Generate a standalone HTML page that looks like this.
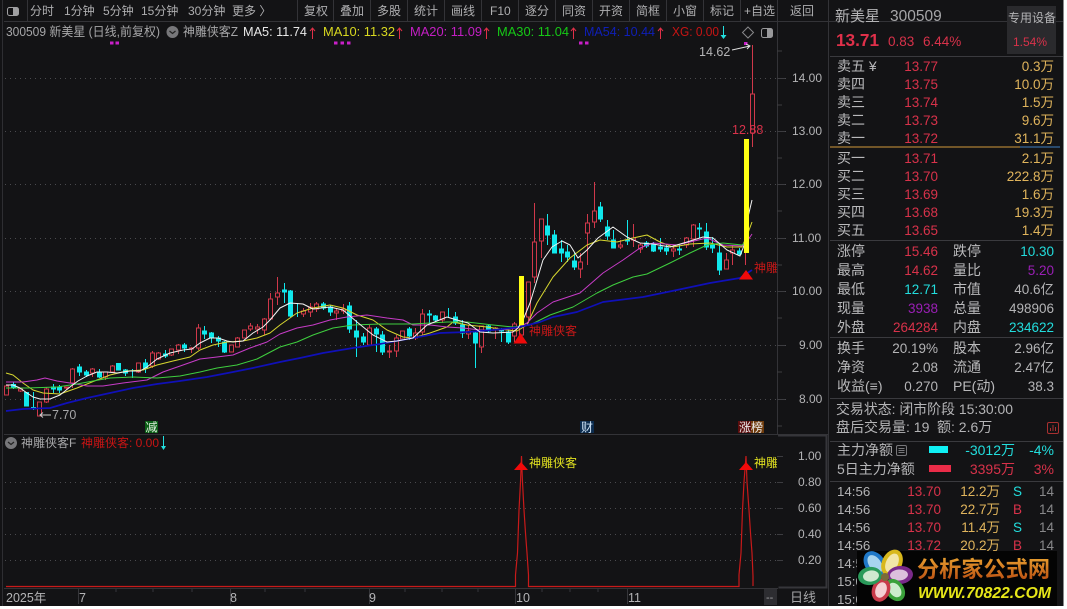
<!DOCTYPE html>
<html><head><meta charset="utf-8">
<style>
html,body{margin:0;padding:0;background:#fff;width:1067px;height:609px;overflow:hidden}
svg{display:block;font-family:"Liberation Sans","Noto Sans CJK SC",sans-serif}
.n{font-size:12px;fill:#aeaeb0}
.t{font-size:12.5px}
.a{font-size:12px;fill:#b4b4b6}
.l{font-size:14px;fill:#b9b9bb}
.p{font-size:13.5px;fill:#d8324a;text-anchor:end}
.v{font-size:13.5px;fill:#e0b45c;text-anchor:end}
.g{font-size:13.5px;fill:#b4b4b6;text-anchor:end}
.c{font-size:13.5px;fill:#22dddd;text-anchor:end}
.m{font-size:13.5px;fill:#9a1fb5;text-anchor:end}
.d{fill:none;stroke:#4a4a4e;stroke-width:1;stroke-dasharray:1 4}
.ma{fill:none;stroke-width:1;stroke-linejoin:round}
</style></head><body>
<svg width="1067" height="609" viewBox="0 0 1067 609" xmlns="http://www.w3.org/2000/svg">
<rect width="1067" height="609" fill="#fff"/>
<rect width="1063.5" height="606" fill="#131315"/>
<rect x="2" width="1" height="606" fill="#2e2e32"/>
<!-- top nav -->
<path d="M4 21.5H1063M27.5 0V21M297.5 0V21M333.5 0V21M370.5 0V21M407.5 0V21M444.5 0V21M481.5 0V21M518.5 0V21M555.5 0V21M592.5 0V21M629.5 0V21M666.5 0V21M703.5 0V21M740.5 0V21M777.5 0V21M828.5 0V606" stroke="#333337" fill="none"/>
<rect x="7.5" y="7.5" width="11" height="8" rx="2" fill="none" stroke="#a0a0a2"/><rect x="13" y="8" width="5" height="7" fill="#a0a0a2"/>
<g class="n">
<text x="30" y="15">分时</text><text x="64" y="15">1分钟</text><text x="103" y="15">5分钟</text><text x="141" y="15">15分钟</text><text x="188" y="15">30分钟</text><text x="232" y="15">更多 〉</text>
<text x="304" y="15">复权</text><text x="340" y="15">叠加</text><text x="377" y="15">多股</text><text x="414" y="15">统计</text><text x="451" y="15">画线</text><text x="490" y="15">F10</text><text x="525" y="15">逐分</text><text x="562" y="15">同资</text><text x="599" y="15">开资</text><text x="636" y="15">简框</text><text x="673" y="15">小窗</text><text x="710" y="15">标记</text><text x="744" y="15">+自选</text><text x="790" y="15">返回</text>
</g>
<!-- info row -->
<text x="6" y="36" class="t" fill="#a6a6a8" textLength="154" lengthAdjust="spacingAndGlyphs">300509 新美星 (日线,前复权)</text>
<circle cx="172.500" cy="32" r="6" fill="#77777a"/><path d="M169.500 31l3 2.500 3-2.500" stroke="#222" fill="none" stroke-width="1.200"/>
<text x="183" y="36" class="t" fill="#a6a6a8" textLength="55" lengthAdjust="spacingAndGlyphs">神雕侠客Z</text>
<text x="243" y="36" class="t" fill="#e8e8e8" textLength="64" lengthAdjust="spacingAndGlyphs">MA5: 11.74</text>
<text x="323" y="36" class="t" fill="#d8d820" textLength="72" lengthAdjust="spacingAndGlyphs">MA10: 11.32</text>
<text x="410" y="36" class="t" fill="#c41fc4" textLength="72" lengthAdjust="spacingAndGlyphs">MA20: 11.09</text>
<text x="497" y="36" class="t" fill="#16c916" textLength="72" lengthAdjust="spacingAndGlyphs">MA30: 11.04</text>
<text x="584" y="36" class="t" fill="#0f1fb8" textLength="71" lengthAdjust="spacingAndGlyphs">MA54: 10.44</text>
<text x="672" y="36" class="t" fill="#c81414" textLength="47" lengthAdjust="spacingAndGlyphs">XG: 0.00</text>
<path d="M312.500 39V28M310 31l2.500-3 2.500 3M399.500 39V28M397 31l2.500-3 2.500 3M486.500 39V28M484 31l2.500-3 2.500 3M573.500 39V28M571 31l2.500-3 2.500 3M660.500 39V28M658 31l2.500-3 2.500 3" stroke="#e03048" fill="none"/>
<path d="M723.500 26V36" stroke="#22e0e0"/><path d="M720.500 35h6l-3 4z" fill="#22e0e0"/>
<path d="M748 27l5.500 5.500-5.500 5.500-5.500-5.500z" fill="none" stroke="#88888a"/>
<rect x="761.500" y="28.500" width="11" height="9" rx="2" fill="none" stroke="#99999b"/><rect x="767" y="29" width="5" height="8" fill="#99999b"/>
<!-- dots -->
<path d="M110 41.500h3.500v3h-3.500zM115.500 41.500h3.500v3h-3.500zM334 41.500h3.500v3h-3.500zM340.500 41.500h3.500v3h-3.500zM347 41.500h3.500v3h-3.500zM579 41.500h3.500v3h-3.500zM585 41.500h3.500v3h-3.500zM744 42h3.500v3h-3.500z" fill="#c81fc8"/>
<!-- grid -->
<path class="d" d="M5 78.500H790M5 131.500H790M5 184.500H790M5 238.500H790M5 291.500H790M5 345.500H790M5 399.500H790"/>
<path class="d" d="M5 482.500H782M5 508.500H782M5 534.500H782M5 560.500H782"/>
<!-- axis lines -->
<path d="M777.500 22V434M4 434.500H828M4 588.500H778" stroke="#333337" fill="none"/>
<path d="M778 435.500H826.500V587.500H778.500" stroke="#36363a" stroke-width="2" fill="none"/>
<path d="M777 51h5M777 78.500h8M777 105h5M777 131.500h8M777 158h5M777 184.500h8M777 211h5M777 238.500h8M777 265h5M777 291.500h8M777 318h5M777 345.500h8M777 372h5M777 399.500h8M777 426h5M777 456.500h6M777 482.500h6M777 508.500h6M777 534.500h6M777 560.500h6" stroke="#3c3c40" fill="none"/>
<g class="a">
<text x="792" y="82">14.00</text><text x="792" y="135">13.00</text><text x="792" y="188">12.00</text><text x="792" y="242">11.00</text><text x="792" y="295">10.00</text><text x="799" y="349">9.00</text><text x="799" y="403">8.00</text>
<text x="798" y="460">1.00</text><text x="798" y="486">0.80</text><text x="798" y="512">0.60</text><text x="798" y="538">0.40</text><text x="798" y="564">0.20</text>
</g>
<!-- candles red -->
<path fill="none" stroke="#d0384a" d="M6.500 386V386M6.500 395V395M4.500 386h4V395h-4z
M20.500 388V389M20.500 391V392M18.500 389h4V391h-4z
M39.500 402V402M37.500 402h4V416h-4z
M46.500 387V389M46.500 402V403M44.500 389h4V402h-4z
M66.500 387V387M66.500 388V390M64.500 387h4V388h-4z
M72.500 368V369M72.500 383V388M70.500 369h4V383h-4z
M92.500 368V369M92.500 373V377M90.500 369h4V373h-4z
M105.500 377V380M103.500 372h4V377h-4z
M112.500 365V366M112.500 372V373M110.500 366h4V372h-4z
M138.500 372V373M136.500 363h4V372h-4z
M152.500 351V353M152.500 366V368M150.500 353h4V366h-4z
M158.500 352V353M158.500 359V360M156.500 353h4V359h-4z
M171.500 355V356M169.500 349h4V355h-4z
M178.500 344V345M178.500 350V354M176.500 345h4V350h-4z
M191.500 347V348M191.500 349V353M189.500 348h4V349h-4z
M198.500 324V328M198.500 348V350M196.500 328h4V348h-4z
M229.500 345h4V352h-4z
M237.500 337V338M235.500 338h4V347h-4z
M242.500 330h4V338h-4z
M250.500 323V326M250.500 329V331M248.500 326h4V329h-4z
M257.500 324V327M257.500 329V334M255.500 327h4V329h-4z
M264.500 318V319M264.500 330V335M262.500 319h4V330h-4z
M270.500 293V299M270.500 319V320M268.500 299h4V319h-4z
M277.500 277V293M277.500 297V305M275.500 293h4V297h-4z
M303.500 308V311M303.500 314V317M301.500 311h4V314h-4z
M310.500 303V307M310.500 312V317M308.500 307h4V312h-4z
M316.500 302V304M316.500 309V312M314.500 304h4V309h-4z
M336.500 308V311M336.500 313V320M334.500 311h4V313h-4z
M343.500 304V309M343.500 311V314M341.500 309h4V311h-4z
M369.500 325V328M367.500 328h4V345h-4z
M389.500 345V351M389.500 352V358M387.500 351h4V352h-4z
M396.500 335V338M396.500 351V357M394.500 338h4V351h-4z
M400.500 331h4V339h-4z
M415.500 328V333M415.500 338V340M413.500 333h4V338h-4z
M422.500 309V314M422.500 332V335M420.500 314h4V332h-4z
M442.500 320V323M440.500 312h4V320h-4z
M468.500 325V331M468.500 334V339M466.500 331h4V334h-4z
M481.500 347V353M479.500 326h4V347h-4z
M495.500 327V328M495.500 330V339M493.500 328h4V330h-4z
M514.500 322V324M514.500 336V342M512.500 324h4V336h-4z
M519.500 325h4V335h-4z
M528.500 317V323M526.500 282h4V317h-4z
M534.500 203V242M534.500 277V283M532.500 242h4V277h-4z
M541.500 241V258M539.500 219h4V241h-4z
M580.500 253V262M580.500 269V278M578.500 262h4V269h-4z
M587.500 214V223M587.500 233V265M585.500 223h4V233h-4z
M594.500 182V211M594.500 222V228M592.500 211h4V222h-4z
M620.500 240V245M620.500 247V249M618.500 245h4V247h-4z
M633.500 224V238M633.500 240V247M631.500 238h4V240h-4z
M640.500 243V245M640.500 249V253M638.500 245h4V249h-4z
M673.500 245V249M673.500 251V257M671.500 249h4V251h-4z
M686.500 237V238M686.500 245V248M684.500 238h4V245h-4z
M693.500 224V225M693.500 239V247M691.500 225h4V239h-4z
M726.500 253V260M724.500 260h4V269h-4z
M732.500 245V250M732.500 253V265M730.500 250h4V253h-4z
M745.500 253V265
M752.500 45V94M752.500 133V147M750.500 94h4V133h-4z"/>
<!-- candles cyan -->
<path fill="#10e8ec" stroke="#10e8ec" d="M13.500 382V389M11.500 384.500h4V387h-4z
M26.500 392V406M24.500 392.500h4V406h-4z
M33.500 392V410M31.500 407.500h4V409h-4z
M53.500 384V393M51.500 387h4V389h-4z
M59.500 385V393M57.500 387h4V390h-4z
M79.500 364V376M77.500 367h4V372h-4z
M86.500 370V377M84.500 372h4V375h-4z
M99.500 369V378M97.500 372h4V377h-4z
M118.500 363V370M116.500 363.500h4V370h-4z
M125.500 369V376M123.500 370h4V373h-4z
M132.500 369V378
M145.500 359V373M143.500 363h4V368h-4z
M165.500 350V358M163.500 354h4V356h-4z
M184.500 343V352M182.500 345h4V348h-4z
M204.500 326V339M202.500 331h4V334h-4z
M211.500 332V343M209.500 333h4V338h-4z
M218.500 336V347M216.500 338h4V341h-4z
M224.500 341V353M222.500 342h4V352h-4z
M284.500 283V303M282.500 290h4V292h-4z
M290.500 290V317M288.500 291h4V316h-4z
M297.500 303V317
M323.500 302V310M321.500 304h4V308h-4z
M330.500 305V316M328.500 307h4V312h-4z
M349.500 302V333M347.500 306h4V329h-4z
M356.500 320V357M354.500 331h4V337h-4z
M363.500 333V345M361.500 337h4V342h-4z
M376.500 327V352M374.500 329h4V334h-4z
M382.500 331V355M380.500 335h4V352h-4z
M409.500 327V340M407.500 329h4V336h-4z
M429.500 310V323M427.500 314h4V315h-4z
M435.500 315V322M433.500 316h4V320h-4z
M448.500 308V318
M455.500 312V325M453.500 317h4V323h-4z
M462.500 320V338M460.500 325h4V333h-4z
M475.500 332V368M473.500 333h4V343h-4z
M488.500 325V333M486.500 326h4V331h-4z
M501.500 328V342M499.500 329h4V331h-4z
M508.500 330V344M506.500 332h4V342h-4z
M547.500 214V245M545.500 226h4V235h-4z
M554.500 230V253M552.500 235h4V253h-4z
M561.500 240V262M559.500 249h4V253h-4z
M567.500 245V262M565.500 252h4V257h-4z
M574.500 253V270M572.500 261h4V267h-4z
M600.500 202V222M598.500 207h4V219h-4z
M607.500 220V240M605.500 227h4V236h-4z
M613.500 230V248M611.500 240h4V248h-4z
M627.500 220V245M625.500 240h4V241h-4z
M646.500 241V248M644.500 243h4V246h-4z
M653.500 242V252M651.500 245h4V251h-4z
M660.500 238V252M658.500 247h4V249h-4z
M666.500 245V255M664.500 248h4V251h-4z
M679.500 245V255M677.500 249h4V250h-4z
M699.500 223V238M697.500 228h4V229h-4z
M706.500 223V250M704.500 232h4V247h-4z
M712.500 237V253M710.500 245h4V248h-4z
M719.500 243V275M717.500 253h4V270h-4z
M739.500 248V255M737.500 251h4V254h-4z"/>
<!-- MA -->
<polyline class="ma" stroke="#d7d730" points="6,373 13,375 23,383 33,390 43,393 60,394 77,388 97,380 110,375 127,371 143,370 157,365 173,361 190,357 200,350 213,345 227,342 243,341 257,338 270,333 280,325 297,313 313,308 330,305 343,308 357,315 373,320 387,330 403,337 413,338 430,333 447,327 453,322 467,325 487,327 507,330 517,331 527,325 537,303 553,277 570,258 587,245 600,240 617,242 633,238 647,235 660,242 673,247 690,244 710,243 727,247 742,247 748,233 752,222"/>
<polyline class="ma" stroke="#c73cc7" points="6,382 23,382 37,380 45,378 57,381 70,383 87,386 103,386 123,383 147,380 163,372 183,365 200,359 217,357 233,355 250,348 267,342 280,334 297,328 313,325 330,320 347,317 367,315 387,318 403,320 413,325 430,325 447,327 463,328 480,330 500,330 517,328 527,323 537,313 553,302 580,293 603,273 623,260 640,248 653,243 677,245 707,238 723,245 742,246 748,240 752,234"/>
<polyline class="ma" stroke="#3fcf3f" points="6,388 27,388 57,387 77,384 93,381 110,378 133,377 157,378 180,376 200,372 217,368 237,365 257,359 280,347 297,342 313,335 333,328 353,325 380,324 413,324 447,322 467,322 493,325 513,327 530,325 550,315 573,307 597,293 613,285 633,277 647,274 670,263 690,253 707,245 723,243 742,245 748,240"/>
<polyline class="ma" stroke="#1010b8" style="stroke-width:1.7" points="6,411 23,409 50,408 67,403 87,398 110,393 133,388 157,384 180,381 207,377 233,372 253,368 280,362 300,358 323,353 353,348 380,344 413,338 440,333 467,332 493,330 520,327 540,322 553,317 577,312 603,302 643,297 677,290 710,283 740,278 752,270"/>
<polyline class="ma" stroke="#f2f2f2" points="6,385 13,385 20,388 27,393 33,397 40,399 50,399 60,395 70,387 78,381 87,376 97,372 107,372 117,373 130,371 140,371 147,367 157,359 170,353 183,350 192,349 200,343 210,338 218,338 227,341 233,342 243,341 253,333 263,327 270,320 280,308 290,303 303,304 313,309 330,307 343,310 357,322 373,335 387,342 397,341 413,338 427,325 447,317 457,320 468,323 480,332 493,333 513,332 518,328 523,320 530,303 537,280 543,260 552,247 562,241 570,245 578,258 587,250 598,238 613,227 627,237 640,243 653,244 670,247 687,242 703,237 713,238 727,250 740,256 745,243 748,217 752,200"/>
<!-- yellow bars -->
<rect x="519" y="276" width="5" height="49" fill="#ffff14"/>
<rect x="744" y="139" width="5" height="114" fill="#ffff14"/>
<!-- triangles -->
<path d="M520.500 333L527.500 343.500H513.500z" fill="#ee0a0a"/>
<path d="M746 270L753 279.500H739z" fill="#ee0a0a"/>
<text x="529" y="335" font-size="12" fill="#c81818">神雕侠客</text>
<svg x="752" y="255" width="25" height="20" overflow="hidden"><text x="2" y="17" font-size="12" fill="#c81818">神雕</text></svg>
<!-- labels -->
<text x="699" y="56" font-size="12.500" fill="#b4b4b6">14.62</text>
<path d="M732 50L750 46M746 44l4 2-3 3" stroke="#ddd" fill="none"/>
<text x="732" y="134" font-size="12.500" fill="#d8324a">12.88</text>
<text x="52" y="419" font-size="12.500" fill="#a6a6a8">7.70</text>
<path d="M51 415H40M43 412.500l-3 2.500 3 2.500" stroke="#ccc" fill="none"/>
<!-- tags -->
<rect x="145" y="421" width="13" height="12" fill="#0b5e16"/><text x="145.500" y="431.500" font-size="12" fill="#dfeedd">减</text>
<rect x="580" y="421" width="14" height="12" fill="#0c2c4e"/><text x="581" y="431.500" font-size="12" fill="#cfe3f5">财</text>
<rect x="738" y="421" width="13" height="12" fill="#5c0d0d"/><rect x="751" y="421" width="13" height="12" fill="#6e3b0c"/><text x="739" y="431.500" font-size="12" fill="#eee">涨榜</text>
<!-- lower panel -->
<circle cx="11" cy="443" r="6" fill="#77777a"/><path d="M8 442l3 2.500 3-2.500" stroke="#222" fill="none" stroke-width="1.200"/>
<text x="21" y="447" font-size="12" fill="#a6a6a8">神雕侠客F</text>
<text x="81" y="447" font-size="12" fill="#c81414">神雕侠客: 0.00</text>
<path d="M163.500 436V447" stroke="#22e0e0"/><path d="M161 446h5l-2.500 4z" fill="#22e0e0"/>
<path fill="none" stroke="#c81a1a" stroke-width="1.200" d="M6 586.500H515.500V575L517.500 553L519 510L520.500 482L521.500 456L522.500 482L524 510L525.500 533L527 553L528.500 575V586.500H739V575L741 553L742.500 510L744 482L746 456L747 482L749 510L750.500 533L752 553L753 576V586"/>
<path d="M521 462L528 470H514z" fill="#f20a0a"/>
<path d="M746 462L753 470H739z" fill="#f20a0a"/>
<text x="529" y="467" font-size="12" fill="#e0e020">神雕侠客</text>
<svg x="752" y="455" width="25" height="18" overflow="hidden"><text x="2" y="12" font-size="12" fill="#e0e020">神雕</text></svg>
<!-- time axis -->
<path d="M78.500 589V604M230.500 589V604M369.500 589V604M515.500 589V604M627.500 589V604M116 589v3M153 589v3M192 589v3M265 589v3M305 589v3M405 589v3M442 589v3M478 589v3M542 589v3M570 589v3M598 589v3" stroke="#36363a" fill="none"/>
<g class="a" style="font-size:12.5px"><text x="6" y="602">2025年</text><text x="79" y="602">7</text><text x="230" y="602">8</text><text x="369" y="602">9</text><text x="516" y="602">10</text><text x="628" y="602">11</text></g>
<rect x="764" y="589" width="13" height="16" fill="#2d2d31"/><text x="766" y="601" font-size="11" fill="#a0a0a2">--</text>
<text x="790" y="602" font-size="13" fill="#a6a6a8">日线</text>
<!-- right panel header -->
<text x="835" y="21" font-size="15" fill="#b4b4b6">新美星</text>
<text x="890" y="21" font-size="15.500" fill="#a6a6a8">300509</text>
<text x="836" y="46" font-size="17.200" font-weight="700" fill="#e0304a">13.71</text>
<text x="888" y="46" font-size="13.500" fill="#d8324a">0.83</text>
<text x="923" y="46" font-size="13.500" fill="#d8324a">6.44%</text>
<rect x="1007" y="6" width="49" height="48" fill="#2a2a2d"/>
<text x="1008" y="22" font-size="12" fill="#b4b4b6">专用设备</text>
<text x="1013" y="46" font-size="12" fill="#d8324a">1.54%</text>
<path d="M830 56.500H1063M830 240.500H1063M830 337.500H1063M830 398.500H1063M830 441.500H1063M830 481.500H1063" stroke="#3a3a3e" fill="none"/>
<path d="M830 147H1020" stroke="#d19a3c"/><path d="M1020 147H1060" stroke="#3f7fc4"/>
<!-- order book -->
<g class="l"><text x="837" y="71">卖五 ¥</text><text x="837" y="89">卖四</text><text x="837" y="107">卖三</text><text x="837" y="125">卖二</text><text x="837" y="143">卖一</text><text x="837" y="163">买一</text><text x="837" y="181">买二</text><text x="837" y="199">买三</text><text x="837" y="217">买四</text><text x="837" y="235">买五</text></g>
<g class="p"><text x="938" y="71">13.77</text><text x="938" y="89">13.75</text><text x="938" y="107">13.74</text><text x="938" y="125">13.73</text><text x="938" y="143">13.72</text><text x="938" y="163">13.71</text><text x="938" y="181">13.70</text><text x="938" y="199">13.69</text><text x="938" y="217">13.68</text><text x="938" y="235">13.65</text></g>
<g class="v"><text x="1054" y="71">0.3万</text><text x="1054" y="89">10.0万</text><text x="1054" y="107">1.5万</text><text x="1054" y="125">9.6万</text><text x="1054" y="143">31.1万</text><text x="1054" y="163">2.1万</text><text x="1054" y="181">222.8万</text><text x="1054" y="199">1.6万</text><text x="1054" y="217">19.3万</text><text x="1054" y="235">1.4万</text></g>
<!-- stats -->
<g class="l"><text x="837" y="256">涨停</text><text x="953" y="256">跌停</text><text x="837" y="275">最高</text><text x="953" y="275">量比</text><text x="837" y="294">最低</text><text x="953" y="294">市值</text><text x="837" y="313">现量</text><text x="953" y="313">总量</text><text x="837" y="332">外盘</text><text x="953" y="332">内盘</text><text x="837" y="353">换手</text><text x="953" y="353">股本</text><text x="837" y="372">净资</text><text x="953" y="372">流通</text><text x="837" y="391">收益(≡)</text><text x="953" y="391">PE(动)</text></g>
<text class="p" x="938" y="256">15.46</text><text class="c" x="1054" y="256">10.30</text>
<text class="p" x="938" y="275">14.62</text><text class="m" x="1054" y="275">5.20</text>
<text class="c" x="938" y="294">12.71</text><text class="g" x="1054" y="294">40.6亿</text>
<text class="m" x="938" y="313">3938</text><text class="g" x="1054" y="313">498906</text>
<text class="p" x="938" y="332">264284</text><text class="c" x="1054" y="332">234622</text>
<text class="g" x="938" y="353">20.19%</text><text class="g" x="1054" y="353">2.96亿</text>
<text class="g" x="938" y="372">2.08</text><text class="g" x="1054" y="372">2.47亿</text>
<text class="g" x="938" y="391">0.270</text><text class="g" x="1054" y="391">38.3</text>
<text x="836" y="414" font-size="14" fill="#b4b4b6" textLength="177" lengthAdjust="spacingAndGlyphs">交易状态: 闭市阶段 15:30:00</text>
<text x="836" y="432" font-size="14" fill="#b4b4b6">盘后交易量: 19</text>
<text x="937" y="432" font-size="14" fill="#b4b4b6">额: 2.6万</text>
<rect x="1047.500" y="422.500" width="11" height="11" rx="1.500" fill="none" stroke="#a83030"/><path d="M1050.500 431v-3M1053 431v-6M1055.500 431v-4" stroke="#a83030"/>
<!-- fund flow -->
<text x="837" y="455" font-size="14" fill="#b4b4b6">主力净额</text>
<rect x="896.500" y="445.500" width="10" height="10" rx="1.500" fill="none" stroke="#77777a"/><path d="M898.500 448.500h6M898.500 450.500h6M898.500 452.500h6" stroke="#77777a"/>
<rect x="929" y="446" width="19" height="7" fill="#0ff0f4"/>
<text class="c" x="1015" y="455" style="font-size:14px">-3012万</text><text class="c" x="1054" y="455" style="font-size:14px">-4%</text>
<text x="837" y="474" font-size="14" fill="#b4b4b6">5日主力净额</text>
<rect x="929" y="465" width="22" height="7" fill="#ea2c48"/>
<text class="p" x="1015" y="474" style="font-size:14px">3395万</text><text class="p" x="1054" y="474" style="font-size:14px">3%</text>
<!-- trades -->
<g class="a" style="font-size:13.3px"><text x="837" y="496">14:56</text><text x="837" y="514">14:56</text><text x="837" y="532">14:56</text><text x="837" y="550">14:56</text><text x="837" y="568">14:56</text><text x="837" y="586">15:00</text><text x="837" y="604">15:07</text></g>
<g class="p"><text x="941" y="496">13.70</text><text x="941" y="514">13.70</text><text x="941" y="532">13.70</text><text x="941" y="550">13.72</text></g>
<g class="v"><text x="1000" y="496">12.2万</text><text x="1000" y="514">22.7万</text><text x="1000" y="532">11.4万</text><text x="1000" y="550">20.2万</text></g>
<text class="c" x="1022" y="496">S</text><text class="p" x="1022" y="514">B</text><text class="c" x="1022" y="532">S</text><text class="p" x="1022" y="550">B</text>
<g class="g" style="fill:#88888a"><text x="1054" y="496">14</text><text x="1054" y="514">14</text><text x="1054" y="532">14</text><text x="1054" y="550">14</text></g>
<!-- watermark -->
<rect x="857" y="551" width="200" height="55" fill="#040404"/>
<g>
<ellipse cx="875" cy="564" rx="10" ry="14" transform="rotate(-35 875 564)" fill="#1f78c8"/><ellipse cx="875" cy="564" rx="6" ry="10" transform="rotate(-35 875 564)" fill="#a8d4ee"/>
<ellipse cx="892" cy="563" rx="10" ry="14" transform="rotate(25 892 563)" fill="#d8b81c"/><ellipse cx="892" cy="563" rx="6" ry="10" transform="rotate(25 892 563)" fill="#f2e6a8"/>
<ellipse cx="900" cy="575" rx="13" ry="9" transform="rotate(-5 900 575)" fill="#7a2a8a"/><ellipse cx="899" cy="575" rx="9" ry="5.500" transform="rotate(-5 899 575)" fill="#dcc0dc"/>
<ellipse cx="895" cy="590" rx="9" ry="12" transform="rotate(-35 895 590)" fill="#3aa03a"/><ellipse cx="895" cy="590" rx="5.500" ry="8" transform="rotate(-35 895 590)" fill="#cdeccd"/>
<ellipse cx="881" cy="590" rx="9" ry="12" transform="rotate(20 881 590)" fill="#c83a4a"/><ellipse cx="881" cy="590" rx="5.500" ry="8" transform="rotate(20 881 590)" fill="#f4d0d4"/>
<ellipse cx="870" cy="576" rx="12" ry="9" transform="rotate(-8 870 576)" fill="#2a9a5a"/><ellipse cx="871" cy="576" rx="8" ry="5.500" transform="rotate(-8 871 576)" fill="#cfe8d0"/>
<circle cx="885" cy="577" r="4" fill="#7a6a3a"/>
</g>
<defs><linearGradient id="o" x1="0" y1="0" x2="0" y2="1"><stop offset="0" stop-color="#e8a030"/><stop offset="1" stop-color="#b84a10"/></linearGradient></defs>
<text x="917" y="577" font-size="22" font-weight="700" fill="url(#o)" textLength="133" lengthAdjust="spacingAndGlyphs">分析家公式网</text>
<text x="918" y="598" font-size="15.500" font-weight="700" font-style="italic" fill="#e6e619" textLength="133" lengthAdjust="spacingAndGlyphs">WWW.70822.COM</text>
</svg>
</body></html>
